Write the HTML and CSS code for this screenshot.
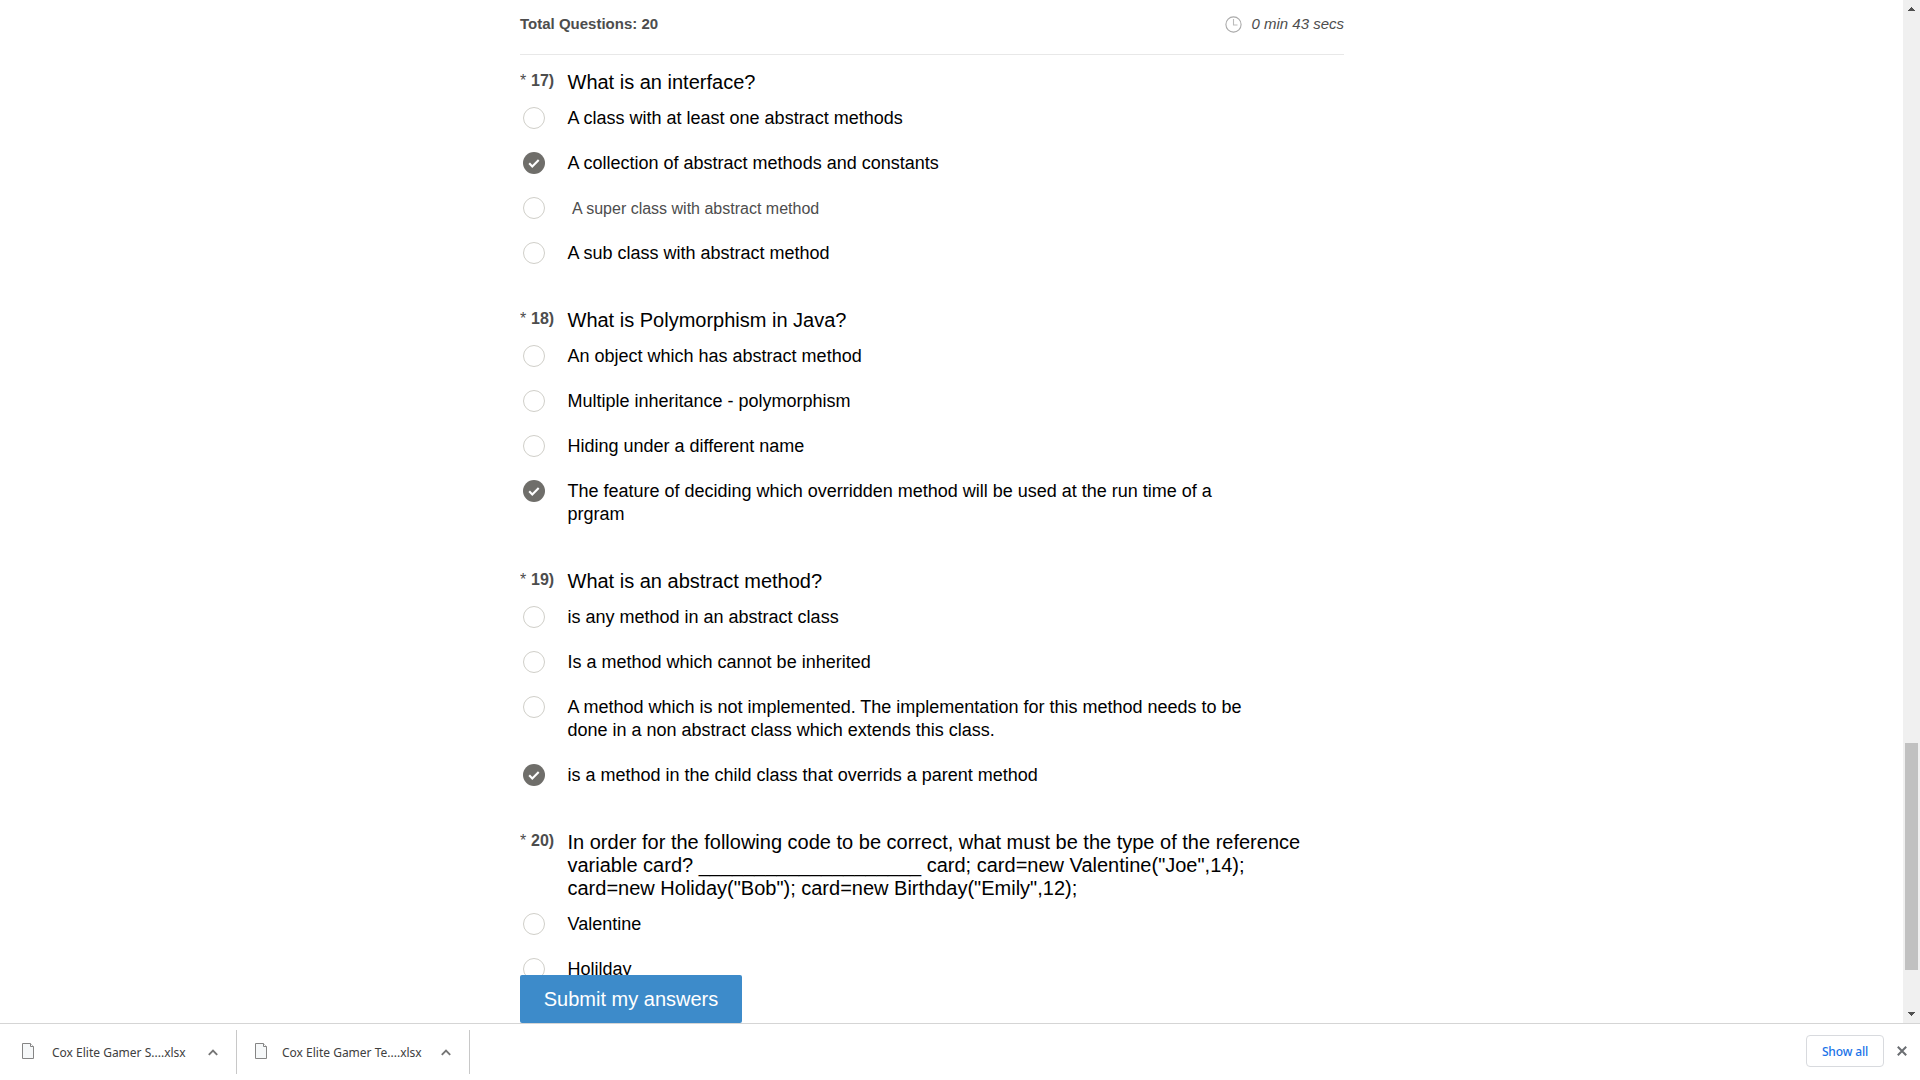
FILE: index.html
```html
<!DOCTYPE html>
<html lang="en">
<head>
<meta charset="utf-8">
<title>Java Quiz</title>
<link rel="stylesheet" href="styles.css">
</head>
<body>
<svg class="defs" width="0" height="0" aria-hidden="true">
  <symbol id="check" viewBox="0 0 22 22"><path d="M6.2 11.2l3.1 3.3 6.4-6.5" fill="none" stroke="#fff" stroke-width="2.1"/></symbol>
  <symbol id="file" viewBox="0 0 12 16"><path d="M.5.5h8l3 3v12H.5z" fill="#f6f8f9" stroke="#858585"/><path d="M8.5.5v3h3" fill="#fff" stroke="#858585"/></symbol>
  <symbol id="chevron" viewBox="0 0 10 7"><path d="M.8 5.8L5 1.6l4.2 4.2" fill="none" stroke="#757575" stroke-width="1.9"/></symbol>
</svg>
<div class="window">
  <div class="viewport">
    <main class="page">
      <header class="quiz-head">
        <span class="total">Total Questions: 20</span>
        <span class="timer">
          <svg width="17" height="17" viewBox="0 0 17 17"><circle cx="8.5" cy="8.5" r="7.6" fill="none" stroke="#aaa" stroke-width="1.1"/><path d="M8.5 3v6h4" fill="none" stroke="#bbb" stroke-width="1.1"/></svg>
          <span class="time">0 min 43 secs</span>
        </span>
      </header>
      <div class="questions">
        <section class="question">
          <div class="title"><span class="num"><i>*</i><b>17)</b></span><span class="text">What is an interface?</span></div>
          <div class="option"><span class="radio"></span><span>A class with at least one abstract methods</span></div>
          <div class="option"><span class="radio on"><svg><use href="#check"/></svg></span><span>A collection of abstract methods and constants</span></div>
          <div class="option"><span class="radio"></span><span class="small">&nbsp;A super class with abstract method</span></div>
          <div class="option"><span class="radio"></span><span>A sub class with abstract method</span></div>
        </section>
        <section class="question">
          <div class="title"><span class="num"><i>*</i><b>18)</b></span><span class="text">What is Polymorphism in Java?</span></div>
          <div class="option"><span class="radio"></span><span>An object which has abstract method</span></div>
          <div class="option"><span class="radio"></span><span>Multiple inheritance - polymorphism</span></div>
          <div class="option"><span class="radio"></span><span>Hiding under a different name</span></div>
          <div class="option"><span class="radio on"><svg><use href="#check"/></svg></span><span>The feature of deciding which overridden method will be used at the run time of a<br>prgram</span></div>
        </section>
        <section class="question">
          <div class="title"><span class="num"><i>*</i><b>19)</b></span><span class="text">What is an abstract method?</span></div>
          <div class="option"><span class="radio"></span><span>is any method in an abstract class</span></div>
          <div class="option"><span class="radio"></span><span>Is a method which cannot be inherited</span></div>
          <div class="option"><span class="radio"></span><span>A method which is not implemented. The implementation for this method needs to be<br>done in a non abstract class which extends this class.</span></div>
          <div class="option"><span class="radio on"><svg><use href="#check"/></svg></span><span>is a method in the child class that overrids a parent method</span></div>
        </section>
        <section class="question">
          <div class="title"><span class="num"><i>*</i><b>20)</b></span><span class="text">In order for the following code to be correct, what must be the type of the reference<br>variable card? ____________________ card; card=new Valentine("Joe",14);<br>card=new Holiday("Bob"); card=new Birthday("Emily",12);</span></div>
          <div class="option"><span class="radio"></span><span>Valentine</span></div>
          <div class="option"><span class="radio"></span><span>Holilday</span></div>
        </section>
      </div>
      <button class="submit">Submit my answers</button>
    </main>
    <div class="scrollbar">
      <svg class="arrow" width="7" height="4" viewBox="0 0 7 4" shape-rendering="crispEdges"><path d="M3 0h1v1h1v1h1v1h1v1H0V3h1V2h1V1h1z" fill="#505050"/></svg>
      <div class="track"><div class="thumb"></div></div>
      <svg class="arrow" width="7" height="4" viewBox="0 0 7 4" shape-rendering="crispEdges"><path d="M0 0h7v1H6v1H5v1H4v1H3V3H2V2H1V1H0z" fill="#505050"/></svg>
    </div>
  </div>
  <footer class="shelf">
    <div class="download first"><svg class="file"><use href="#file"/></svg><span class="name">Cox Elite Gamer S....xlsx</span><svg class="chevron"><use href="#chevron"/></svg></div>
    <div class="download second"><svg class="file"><use href="#file"/></svg><span class="name">Cox Elite Gamer Te....xlsx</span><svg class="chevron"><use href="#chevron"/></svg></div>
    <button class="show-all"><span>Show all</span></button>
    <svg class="close" width="10" height="10" viewBox="0 0 10 10"><path d="M.8.8l8.4 8.4M9.2.8L.8 9.2" stroke="#6b6e72" stroke-width="2"/></svg>
  </footer>
</div>
</body>
</html>
```
FILE: styles.css
```css
* { box-sizing: border-box; }
body { margin: 0; background: #fff; font-family: "Liberation Sans", Arial, sans-serif; }
button { margin: 0; padding: 0; font-family: inherit; }
svg { display: block; flex: none; }
.defs { position: absolute; }

.window { display: flex; flex-direction: column; width: 1920px; height: 1080px; overflow: hidden; }
.viewport { display: flex; justify-content: space-between; height: 1023px; overflow: hidden; }

.page { display: flex; flex-direction: column; width: 824px; height: 1023px; margin-left: 520px; }
.quiz-head { display: flex; justify-content: space-between; align-items: center; flex: none; height: 55px; padding-bottom: 6px; border-bottom: 1px solid #e8e8e8; color: #4d4d4d; font-size: 15px; line-height: 20px; white-space: nowrap; }
.total { font-weight: bold; }
.timer { display: flex; align-items: center; gap: 9px; font-style: italic; }

.questions { display: flex; flex-direction: column; gap: 22px; flex: 1; min-height: 0; padding-top: 16px; overflow: hidden; }
.question { flex: none; display: flex; flex-direction: column; }
.title { display: flex; margin-bottom: 13px; font-size: 20px; line-height: 23px; color: #000; white-space: nowrap; }
.num { display: flex; width: 47.5px; flex: none; gap: 5px; font-size: 16px; line-height: 20px; color: #4d4d4d; }
.num i { font-style: normal; width: 6px; }
.option { display: flex; padding-left: 3px; margin-bottom: 22px; gap: 22.5px; font-size: 18px; line-height: 23px; color: #000; white-space: nowrap; }
.small { font-size: 16px; color: #4d4d4d; }
.radio { flex: none; width: 22px; height: 22px; border: 1px solid #d0cfc9; border-radius: 50%; }
.radio.on { border: 0; background: #6f6e6a; }
.radio svg { width: 22px; height: 22px; }

.submit { flex: none; width: 222px; height: 48px; border: 0; border-radius: 2px; background: #3d8bca; color: #fff; font-size: 20px; white-space: nowrap; }

.scrollbar { display: flex; flex-direction: column; align-items: center; justify-content: space-between; width: 17px; padding: 7px 0; background: #f0f0f0; }
.track { width: 13px; flex: 1; padding-top: 732px; }
.thumb { height: 227px; background: #c1c1c1; }

.shelf { display: flex; align-items: center; height: 57px; border-top: 1px solid #d5d5d5; font-family: "Noto Sans", sans-serif; font-size: 12px; color: #404040; }
.download { display: flex; align-items: center; height: 44px; border-right: 1px solid #c8c8c8; white-space: nowrap; }
.first { width: 237px; padding-left: 22px; }
.second { width: 233px; padding-left: 18px; }
.file { width: 12px; height: 16px; margin-right: 18px; }
.second .file { margin-right: 15px; }
.name { width: 156px; }
.second .name { width: 159px; }
.first .file, .second .file { margin-bottom: 3px; }
.chevron { width: 10px; height: 7px; }
.show-all { width: 78px; height: 32px; margin: -2px 13px 0 auto; border: 1px solid #d8dade; border-radius: 4px; background: #fff; color: #1a73e8; font-size: 12px; font-weight: 500; white-space: nowrap; }
.show-all span { letter-spacing: -0.15px; }
.close { margin: -2px 13px 0 0; }
```
